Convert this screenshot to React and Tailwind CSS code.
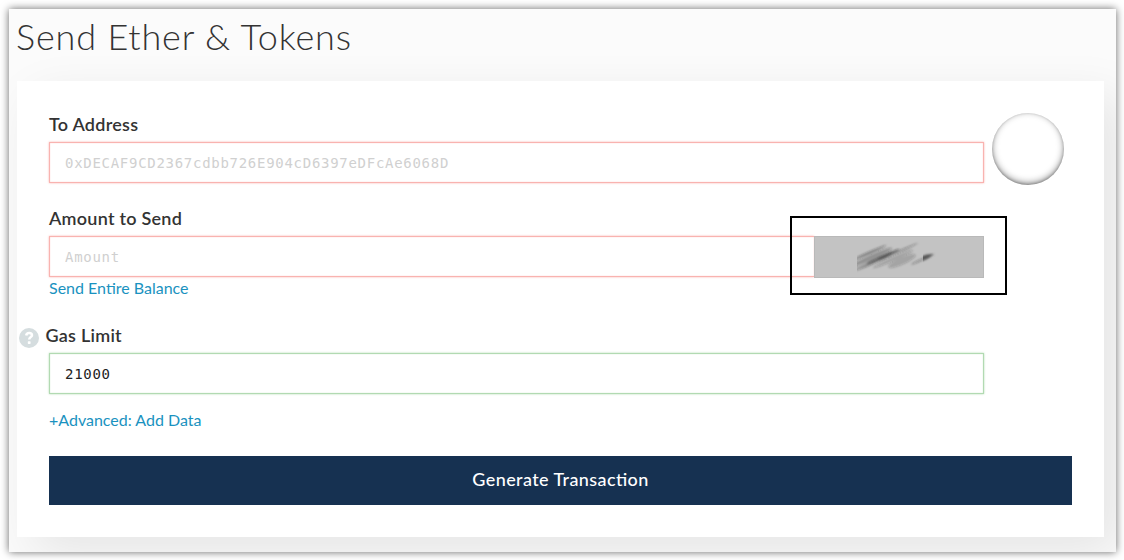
import React from 'react';

function Label({ children }) {
  return (
    <div className="h-[29px] whitespace-nowrap text-[18px] leading-[22px] font-semibold tracking-[0.25px] text-[#333333]">
      {children}
    </div>
  );
}

const fieldBase =
  'block h-[41px] min-w-0 border bg-white pl-[15px] pr-4 pt-[1px] font-["DejaVu_Sans_Mono",monospace] text-[14px] tracking-[0.715px] outline-none placeholder:text-[#d0d0d0] placeholder:opacity-100';
const invalid = 'border-[#f9b3b0] shadow-[inset_0_0_1px_#fba29f,0_0_2px_#f8b5b2]';
const valid = 'border-[#b2dab2] shadow-[inset_0_0_1px_#a5d8a5,0_0_2px_#b5dcb5]';

const strokes = [
  { x: 54, y: 16, rx: 19, ry: 1.4, opacity: 0.4 },
  { x: 57, y: 20, rx: 22, ry: 2.4, opacity: 0.3 },
  { x: 68, y: 19.5, rx: 18, ry: 1.4, opacity: 0.55 },
  { x: 70, y: 18.5, rx: 9, ry: 0.9, opacity: 0.45 },
  { x: 83, y: 15, rx: 22, ry: 1.2, opacity: 0.3 },
  { x: 58, y: 26, rx: 19, ry: 1, opacity: 0.35 },
  { x: 78, y: 22, rx: 22, ry: 2.2, opacity: 0.2 },
  { x: 87, y: 24, rx: 15, ry: 3.6, opacity: 0.2 },
  { x: 49, y: 28, rx: 14, ry: 1.4, opacity: 0.2 },
  { x: 106, y: 23, rx: 11, ry: 1.2, opacity: 0.3 },
];

function Scribble() {
  return (
    <svg className="block h-10 w-[168px]" viewBox="0 0 168 40">
      <defs>
        <filter id="soft" x="0" y="0" width="168" height="40" filterUnits="userSpaceOnUse">
          <feGaussianBlur stdDeviation="0.8" />
        </filter>
        <clipPath id="edge">
          <rect x="42" y="0" width="80" height="40" />
        </clipPath>
        <clipPath id="tipEdge">
          <rect x="108" y="0" width="30" height="40" />
        </clipPath>
      </defs>
      <g clipPath="url(#edge)">
        <g filter="url(#soft)" fill="#202020">
          {strokes.map((s, i) => (
            <ellipse key={i} cx={s.x} cy={s.y} rx={s.rx} ry={s.ry} opacity={s.opacity} transform={`rotate(-24 ${s.x} ${s.y})`} />
          ))}
        </g>
      </g>
      <g clipPath="url(#tipEdge)">
        <path filter="url(#soft)" d="M105 20Q112 16.5 119 17Q114 21.5 105 24.5Z" fill="#555555" />
      </g>
    </svg>
  );
}

export default function App() {
  return (
    <div className="h-[560px] w-[1124px] overflow-hidden bg-white pl-[9px] pt-[9px] font-[Lato,sans-serif]">
      <div className="h-[543px] w-[1107px] shadow-[0_0_8px_rgba(0,0,0,0.6)]">
        <main className="h-full w-full overflow-hidden bg-[#fbfbfb] pl-2">
          <h1 className="-ml-px h-[72px] whitespace-nowrap pt-[4px] text-[36px] leading-[46px] font-light tracking-[0.83px] text-[#333333]">
            Send Ether &amp; Tokens
          </h1>
          <section className="h-[456px] w-[1087px] bg-white pl-8 pt-8 shadow-[16px_16px_47px_rgba(0,0,0,0.09)]">
            <div className="flex h-[94px] gap-2">
              <div className="w-[935px]">
                <Label>To Address</Label>
                <input
                  aria-label="To Address"
                  className={`${fieldBase} w-full ${invalid}`}
                  placeholder="0xDECAF9CD2367cdbb726E904cD6397eDFcAe6068D"
                />
              </div>
              <div className="size-[72px] rounded-full bg-white shadow-[inset_0_-2px_7px_rgba(0,0,0,0.4),inset_0_-1px_3px_rgba(0,0,0,0.25)]" />
            </div>
            <Label>Amount to Send</Label>
            <div className="relative flex w-[935px]">
              <input aria-label="Amount" className={`${fieldBase} flex-1 ${invalid} border-r-0`} placeholder="Amount" />
              <button aria-label="Select token" className="relative h-[42px] w-[170px] border border-[#b9b9b9] bg-[#c3c3c3]">
                <Scribble />
              </button>
              <div className="pointer-events-none absolute -top-5 left-[741px] h-[79px] w-[217px] border-2 border-black" />
            </div>
            <a className="-mt-[1px] block h-[47px] w-fit whitespace-nowrap text-[16px] leading-[22px] text-[#1a92c0]">Send Entire Balance</a>
            <div className="-ml-[30px] flex">
              <svg className="mr-[6.5px] mt-[4px] size-5" viewBox="0 0 20 20">
                <circle cx="10" cy="10" r="10" fill="#d5dddf" />
                <path d="M7.2 7.5C7.4 5.8 8.5 5 10.2 5C12 5 13 6 13 7.3C13 9.2 10.2 9.1 10.2 11.6" fill="none" stroke="#fff" strokeWidth="2.5" />
                <rect x="8.8" y="13.3" width="2.8" height="2.6" rx=".6" fill="#fff" />
              </svg>
              <Label>Gas Limit</Label>
            </div>
            <input
              aria-label="Gas Limit"
              className={`${fieldBase} w-[935px] text-[#222222] ${valid}`}
              defaultValue="21000"
            />
            <a className="mt-[15px] block h-[47px] w-fit whitespace-nowrap text-[16px] leading-[22px] text-[#1a92c0]">+Advanced: Add Data</a>
            <button className="block h-[49px] w-[1023px] bg-[#163151] pb-[2px] text-[18px] font-medium tracking-[0.4px] text-white [font-feature-settings:'liga']">
              Generate Transaction
            </button>
          </section>
        </main>
      </div>
    </div>
  );
}
